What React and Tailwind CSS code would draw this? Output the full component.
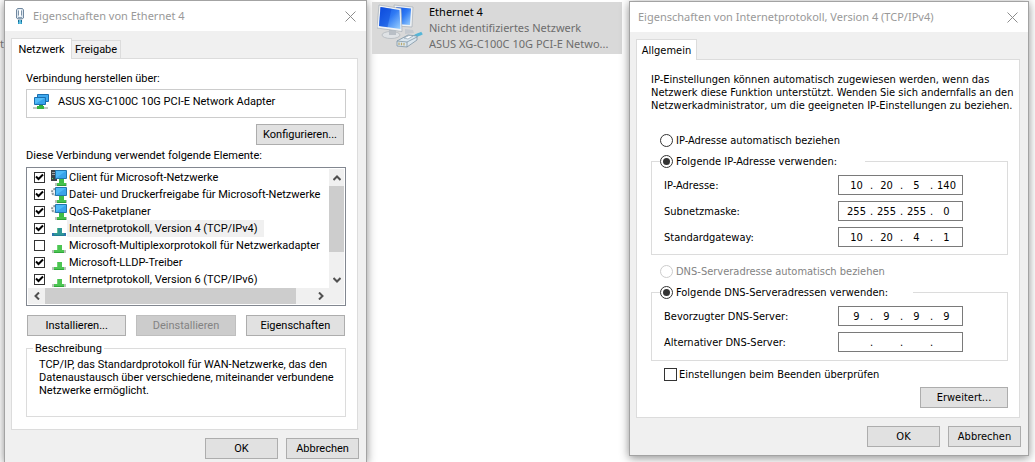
import clsx from "clsx";

const segoe = "font-['Noto_Sans','Open_Sans',sans-serif]";
const sans = "font-['Roboto','Liberation_Sans',sans-serif]";
const tahoma = "font-['DejaVu_Sans_Condensed','DejaVu_Sans',sans-serif]";

function EthernetPlugIcon() {
  return (
    <svg width="10" height="17" viewBox="0 0 10 17" aria-hidden="true" className="shrink-0">
      <path d="M2.500.5h5l1 1.500v8l-1.500 1h-4l-1.500-1v-8z" fill="#dde7f0" stroke="#7088a0" />
      <path d="M3 2.500h1v5H3zM6 2.500h1v5H6z" fill="#7d93a8" />
      <path d="M4 1.500h2v7H4z" fill="#fff" />
      <path d="M3 9h4v2H3z" fill="#8da2b5" />
      <path d="M3 12h4v4H3z" fill="#2c9cc8" />
      <path d="M4.500 12h1v4h-1z" fill="#9be3f5" />
      <path d="M3 12h1v2H3zM6 12h1v2H6z" fill="#176d93" />
    </svg>
  );
}

function AdapterIcon() {
  return (
    <svg width="17" height="16" viewBox="0 0 17 16" aria-hidden="true" className="shrink-0">
      <path d="M4.500.5h11v7h-11z" fill="#3fa9ef" stroke="#1b6fb0" />
      <path d="M1.500 3.500h11v7h-11z" fill="#55bdf8" stroke="#1b6fb0" />
      <path d="M2 10l10-6v6z" fill="#38a4ec" />
      <path d="M6 11h4v2H6z" fill="#2fa33b" />
      <path d="M0 13h15v2H0z" fill="#c2c8c2" />
      <path d="M4 12h7v3H4z" fill="#35b43f" />
    </svg>
  );
}

function ComponentIcon({ kind }) {
  if (kind === "ipv4" || kind === "proto") {
    const top = kind === "ipv4" ? "#2f9797" : "#4cc552";
    const mid = kind === "ipv4" ? "#1f7f93" : "#30a83a";
    const side = kind === "ipv4" ? "#2b74ad" : "#b9c2ba";
    return (
      <svg width="16" height="16" viewBox="0 0 16 16" aria-hidden="true" className="shrink-0">
        <path d="M6 7h5v6H6z" fill={top} />
        <path d="M6 7h1v5H6z" fill="#8adf8e" opacity=".6" />
        <path d="M1 12h14v3H1z" fill={side} />
        <path d="M3 12h10v3H3z" fill={top} />
        <path d="M3 14h10v1H3z" fill={mid} />
      </svg>
    );
  }
  return (
    <svg width="16" height="16" viewBox="0 0 16 16" aria-hidden="true" className="shrink-0">
      {kind === "client" ? (
        <>
          <path d="M0 0h6v11H0z" fill="#3d4347" />
          <path d="M1 2h4v1H1zM1 4h4v1H1z" fill="#9aa3a8" />
          <path d="M1 8h1v1H1z" fill="#5fe066" />
        </>
      ) : (
        <circle cx="4" cy="5" r="3" fill="#eef0f1" stroke="#8f989d" strokeWidth="2" strokeDasharray="2 1" />
      )}
      <path d="M4.500.5h11v8h-11z" fill="#4db9f7" stroke="#2376ad" />
      <path d="M5 8l10-7v7z" fill="#3aa3ea" />
      <path d="M8 9h5v4H8z" fill="#3fbd47" />
      <path d="M4 13h12v3H4z" fill="#b9c2ba" />
      <path d="M6 13h9v3H6z" fill="#45c24c" />
      <path d="M6 15h9v1H6z" fill="#2da037" />
    </svg>
  );
}

function ConnectionIcon() {
  return (
    <svg width="48" height="46" viewBox="0 0 48 46" aria-hidden="true" className="shrink-0">
      <defs>
        <linearGradient id="screen" x1="0" y1="0" x2="1" y2="1">
          <stop offset="0" stopColor="#0c4be0" />
          <stop offset=".5" stopColor="#2f7af4" />
          <stop offset="1" stopColor="#9cd2ff" />
        </linearGradient>
      </defs>
      <path d="M28 25l8 1 1 3-9 1z" fill="#c5cad0" />
      <path d="M17 1l19 2-1 20-16-1z" fill="#eef1f4" stroke="#a5adb6" strokeWidth=".7" />
      <path d="M19 3l15 1.500-1 16.500-13-1z" fill="url(#screen)" />
      <ellipse cx="14" cy="31" rx="9" ry="3.500" fill="#dfe2e5" stroke="#adb3b9" strokeWidth=".7" />
      <path d="M12 25h7v6h-7z" fill="#b9bfc6" />
      <path d="M2 1l22 3.500 1 23-25-3.500z" fill="#f2f4f6" stroke="#a5adb6" strokeWidth=".7" />
      <path d="M3.500 3l19 3 1 19-21.500-3z" fill="url(#screen)" />
      <path d="M3.500 3l11 1.800-4 18.500-8.500-1.300z" fill="#0b47d8" opacity=".45" />
      <path d="M37 33c3-3 5-2 8-4" fill="none" stroke="#55b6d8" strokeWidth="3" />
      <path d="M20 37l11-6 9 1v4l-10 7-10-1z" fill="#dbe6ee" stroke="#7f95a6" strokeWidth=".8" />
      <path d="M20 37l10 1 10-5M30 38v5" fill="none" stroke="#7f95a6" strokeWidth=".8" />
      <path d="M22 38.500v2.500M24.500 38.800v2.500M27 39v2.500" stroke="#b9a86e" strokeWidth="1.200" />
      <path d="M27 34l5-2.500 4 .5-5 3z" fill="#fff" stroke="#7f95a6" strokeWidth=".6" />
    </svg>
  );
}

function Chevron({ d, className }) {
  return (
    <button type="button" aria-label="Bildlauf" className={clsx("flex items-center justify-center bg-[#f0f0f0]", className)}>
      <svg width="8" height="8" viewBox="0 0 8 8" aria-hidden="true">
        <path d={d} fill="none" stroke="#505050" strokeWidth="2" />
      </svg>
    </button>
  );
}

function TitleBar({ icon, children }) {
  return (
    <header className={clsx("flex h-[30px] items-center gap-2.5 bg-white text-[#999999]", segoe)}>
      {icon}
      <h1 className="grow truncate text-[11px] leading-4">{children}</h1>
      <button type="button" aria-label="Schließen" className="pr-2.5">
        <svg width="11" height="11" viewBox="0 0 11 11" aria-hidden="true">
          <path d="M.5.5l10 10M10.500.5l-10 10" stroke="#8c8c8c" />
        </svg>
      </button>
    </header>
  );
}

function Button({ className, ...props }) {
  return (
    <button
      type="button"
      className={clsx(
        "h-[21px] border border-[#adadad] bg-[#e1e1e1] text-center text-[11px] leading-4 text-black disabled:border-[#bfbfbf] disabled:bg-[#cccccc] disabled:text-[#838383]",
        className,
      )}
      {...props}
    />
  );
}

const elements = [
  { label: "Client für Microsoft-Netzwerke", kind: "client", checked: true },
  { label: "Datei- und Druckerfreigabe für Microsoft-Netzwerke", kind: "service", checked: true },
  { label: "QoS-Paketplaner", kind: "service", checked: true },
  { label: "Internetprotokoll, Version 4 (TCP/IPv4)", kind: "ipv4", checked: true, selected: true },
  { label: "Microsoft-Multiplexorprotokoll für Netzwerkadapter", kind: "proto", checked: false },
  { label: "Microsoft-LLDP-Treiber", kind: "proto", checked: true },
  { label: "Internetprotokoll, Version 6 (TCP/IPv6)", kind: "proto", checked: true },
];

function CheckBox({ className, ...props }) {
  return (
    <span className="grid shrink-0">
      <input
        type="checkbox"
        className={clsx("peer col-start-1 row-start-1 appearance-none border border-[#333333] bg-white", className)}
        {...props}
      />
      <svg width="11" height="11" viewBox="0 0 11 11" aria-hidden="true" className="pointer-events-none col-start-1 row-start-1 hidden peer-checked:block">
        <path d="M2 4.500l2.500 2.500L9 2.500" fill="none" stroke="#000" strokeWidth="2" />
      </svg>
    </span>
  );
}

function EthernetWindow() {
  return (
    <section className={clsx("flex min-h-screen min-w-0 flex-col border border-b-0 border-[#a3a3a3] bg-[#f0f0f0] text-[11px] leading-[13px] text-black shadow-[0_2px_9px_rgba(0,0,0,0.45)]", sans)}>
      <TitleBar icon={<span className="-mr-0.5 pl-2.5"><EthernetPlugIcon /></span>}>Eigenschaften von Ethernet 4</TitleBar>
      <div className="flex flex-col px-1.5 pt-[7px]">
        <div role="tablist" className="flex items-end">
          <button type="button" role="tab" aria-selected="true" className="z-10 -mb-px h-[21px] w-[61px] border border-b-0 border-[#dcdcdc] bg-white">
            Netzwerk
          </button>
          <button type="button" role="tab" aria-selected="false" className="h-[18px] w-[49px] border border-b-0 border-l-0 border-[#dcdcdc]">
            Freigabe
          </button>
        </div>
        <div role="tabpanel" className="mr-0.5 flex flex-col border border-[#dcdcdc] bg-white pt-[13px] pr-[11px] pb-3 pl-3.5">
          <p>Verbindung herstellen über:</p>
          <div className="mt-1 flex h-[29px] items-start gap-2 border border-[#cccccc] px-1.5 pt-1">
            <AdapterIcon />
            <span className="pt-px">ASUS XG-C100C 10G PCI-E Network Adapter</span>
          </div>
          <Button className="mt-1.5 mr-0.5 w-[88px] self-end">Konfigurieren...</Button>
          <p className="mt-1">Diese Verbindung verwendet folgende Elemente:</p>
          <div className="mt-[5px] border border-[#828790] p-px">
            <div className="flex">
              <ul className="min-w-0 grow overflow-hidden whitespace-nowrap">
                {elements.map((e) => (
                  <li key={e.label}>
                    <label className="flex h-[17px] items-center pl-1.5">
                      <CheckBox defaultChecked={e.checked} className="size-[11px]" />
                      <span className="ml-1.5 flex">
                        <ComponentIcon kind={e.kind} />
                      </span>
                      <span className={clsx("py-0.5 pr-1.5 pl-0.5", e.selected && "bg-[#f0f0f0]")}>{e.label}</span>
                    </label>
                  </li>
                ))}
              </ul>
              <div className="flex w-[15px] shrink-0 flex-col bg-[#f0f0f0]">
                <Chevron d="M.5 6L4 2.500 7.500 6" className="h-[17px]" />
                <div className="h-[66px] bg-[#cdcdcd]" />
                <div className="grow" />
                <Chevron d="M.5 2L4 5.500 7.500 2" className="h-[17px]" />
              </div>
            </div>
            <div className="flex h-4 bg-[#f0f0f0] pr-[15px]">
              <Chevron d="M6 .5L2.500 4 6 7.500" className="w-[17px]" />
              <div className="w-[251px] bg-[#cdcdcd]" />
              <div className="grow" />
              <Chevron d="M2 .5L5.500 4 2 7.500" className="w-[17px]" />
            </div>
          </div>
          <div className="mt-[9px] grid grid-cols-3 gap-2.5 px-px">
            <Button>Installieren...</Button>
            <Button disabled>Deinstallieren</Button>
            <Button>Eigenschaften</Button>
          </div>
          <fieldset className="mt-[6px] h-[75px] border border-[#dcdcdc] pl-3">
            <legend className="-ml-1.5 px-0.5">Beschreibung</legend>
            <p className="pt-[3px]">
              TCP/IP, das Standardprotokoll für WAN-Netzwerke, das den
              <br />
              Datenaustausch über verschiedene, miteinander verbundene
              <br />
              Netzwerke ermöglicht.
            </p>
          </fieldset>
        </div>
        <div className="mt-2 flex justify-end gap-2 pr-px">
          <Button className="w-[73px]">OK</Button>
          <Button className="w-[73px]">Abbrechen</Button>
        </div>
      </div>
    </section>
  );
}

function ConnectionTile() {
  return (
    <button type="button" className={clsx("mt-0.5 mr-[7px] ml-[5px] flex h-[52px] min-w-0 items-start bg-[#d9d9d9] pt-0.5 pr-1.5 pl-[5px] text-left text-[11px] leading-4 text-[#6d6d6d]", segoe)}>
      <ConnectionIcon />
      <span className="ml-1 flex min-w-0 grow flex-col">
        <span className="text-black">Ethernet 4</span>
        <span>Nicht identifiziertes Netzwerk</span>
        <span className="truncate">ASUS XG-C100C 10G PCI-E Netwo...</span>
      </span>
    </button>
  );
}

function Radio({ label, ...props }) {
  return (
    <label className="flex items-center gap-[3px] has-disabled:text-[#838383]">
      <span className="grid size-[13px] shrink-0 place-items-center">
        <input
          type="radio"
          className="peer col-start-1 row-start-1 size-[13px] appearance-none rounded-full border border-[#333333] bg-white disabled:border-[#cccccc]"
          {...props}
        />
        <span className="pointer-events-none col-start-1 row-start-1 hidden size-[7px] rounded-full bg-[#333333] peer-checked:block" />
      </span>
      {label}
    </label>
  );
}

function AddressRow({ label, octets }) {
  return (
    <div role="group" aria-label={label} className="flex items-center">
      <span className="w-[186px] pl-3">{label}</span>
      <div className="flex h-5 w-[125px] items-center border border-[#7a7a7a] bg-white pr-0.5 pl-[5px]">
        {octets.map((octet, i) => (
          <span key={i} className="flex">
            {i > 0 && <span className="w-[5px] text-center">.</span>}
            <input aria-label={`${label} ${i + 1}`} defaultValue={octet} className="w-[25px] text-center outline-none" />
          </span>
        ))}
      </div>
    </div>
  );
}

function ProtocolWindow() {
  return (
    <section className={clsx("mt-px flex min-w-0 flex-col border border-[#a3a3a3] bg-[#f0f0f0] text-[11px] leading-[13px] text-black shadow-[0_2px_9px_rgba(0,0,0,0.45)]", tahoma)}>
      <TitleBar icon={<span className="-mr-0.5" />}>Eigenschaften von Internetprotokoll, Version 4 (TCP/IPv4)</TitleBar>
      <div className="flex flex-col px-1.5 pt-[7px] pb-2">
        <div role="tablist" className="flex">
          <button type="button" role="tab" aria-selected="true" className="z-10 -mb-px h-[21px] w-[61px] border border-b-0 border-[#dcdcdc] bg-white">
            Allgemein
          </button>
        </div>
        <div role="tabpanel" className="mr-0.5 flex flex-col border border-[#dcdcdc] bg-white pt-[13px] pr-[11px] pb-[9px] pl-3.5">
          <p className="-mr-2 whitespace-nowrap">
            IP-Einstellungen können automatisch zugewiesen werden, wenn das
            <br />
            Netzwerk diese Funktion unterstützt. Wenden Sie sich andernfalls an den
            <br />
            Netzwerkadministrator, um die geeigneten IP-Einstellungen zu beziehen.
          </p>
          <div className="mt-[22px] pl-[9px]">
            <Radio name="ip" label="IP-Adresse automatisch beziehen" />
          </div>
          <fieldset className="mt-2 border border-[#dcdcdc] pb-[7px]">
            <legend className="ml-2 w-[205px]">
              <Radio name="ip" defaultChecked label="Folgende IP-Adresse verwenden:" />
            </legend>
            <div className="flex flex-col gap-1.5 pt-[7px]">
              <AddressRow label="IP-Adresse:" octets={["10", "20", "5", "140"]} />
              <AddressRow label="Subnetzmaske:" octets={["255", "255", "255", "0"]} />
              <AddressRow label="Standardgateway:" octets={["10", "20", "4", "1"]} />
            </div>
          </fieldset>
          <div className="mt-2.5 pl-[9px]">
            <Radio name="dns" disabled label="DNS-Serveradresse automatisch beziehen" />
          </div>
          <fieldset className="mt-2 border border-[#dcdcdc] pb-2">
            <legend className="ml-2 w-[253px]">
              <Radio name="dns" defaultChecked label="Folgende DNS-Serveradressen verwenden:" />
            </legend>
            <div className="flex flex-col gap-1.5 pt-[7px]">
              <AddressRow label="Bevorzugter DNS-Server:" octets={["9", "9", "9", "9"]} />
              <AddressRow label="Alternativer DNS-Server:" octets={["", "", "", ""]} />
            </div>
          </fieldset>
          <label className="mt-[7px] flex items-center gap-0.5 pl-[13px]">
            <CheckBox className="size-[13px]" />
            Einstellungen beim Beenden überprüfen
          </label>
          <Button className="mt-1.5 w-[88px] self-end">Erweitert...</Button>
        </div>
        <div className="mt-2 flex justify-end gap-2 pr-px">
          <Button className="w-[73px]">OK</Button>
          <Button className="w-[73px]">Abbrechen</Button>
        </div>
      </div>
    </section>
  );
}

export default function App() {
  return (
    <main className="relative grid min-h-screen grid-cols-[minmax(0,363fr)_minmax(0,262fr)_minmax(0,400fr)] items-start overflow-hidden bg-white pr-1.5 pl-1">
      <span className={clsx("absolute top-9 left-0 w-1 overflow-hidden text-[11px] leading-4 text-[#6d6d6d]", segoe)}>
        <span className="float-right">et</span>
      </span>
      <EthernetWindow />
      <ConnectionTile />
      <ProtocolWindow />
    </main>
  );
}
